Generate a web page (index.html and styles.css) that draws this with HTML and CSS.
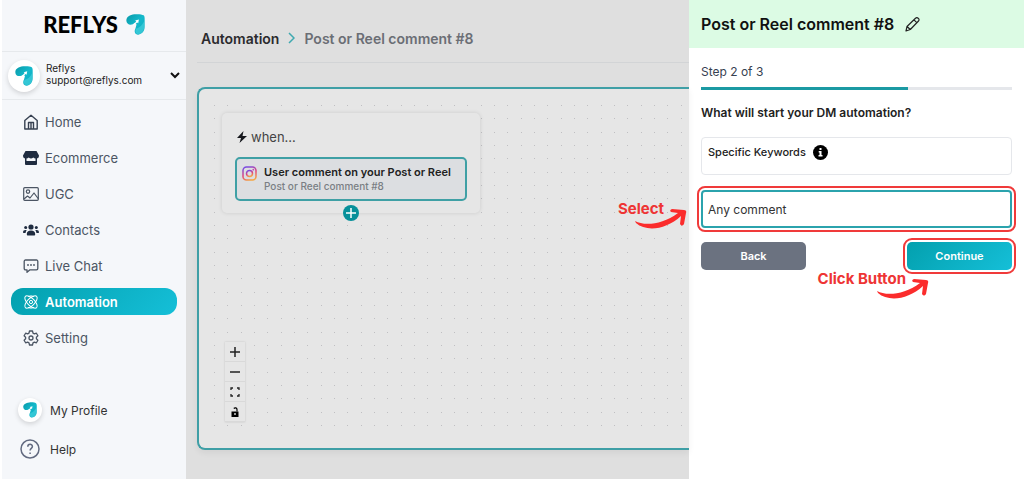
FILE: index.html
```html
<!DOCTYPE html>
<html lang="en">
<head>
  <meta charset="UTF-8">
  <title>Reflys - Automation</title>
  <link rel="stylesheet" href="styles.css">
</head>
<body>
  <!-- shared logo mark -->
  <svg class="defs" width="0" height="0">
    <defs>
      <linearGradient id="markFill" x1="0" y1="0" x2="1" y2="1">
        <stop offset="0" stop-color="#0899a8"/>
        <stop offset="0.5" stop-color="#14b9cb"/>
        <stop offset="1" stop-color="#0cabc0"/>
      </linearGradient>
      <symbol id="mark" viewBox="0 0 56 62">
        <path fill="url(#markFill)" d="M52 4C46 0 34 0 25 1C11 3 1 9 1 19C1 29 11 34 20 30L26 26L31 31L28 42C23 51 26 61 36 61C47 60 55 51 55 38V14C55 9 54 6 52 4Z"/>
        <path fill="#57dbe6" opacity="0.5" d="M30 43C40 41 49 32 54 20V38C53 52 46 60 36 60C27 59 26 49 30 43Z"/>
        <path fill="#fff" d="M38 16L36 27L33 25L22 35L20 33L30 22L27 19Z"/>
      </symbol>
    </defs>
  </svg>

  <div class="app">
    <aside class="sidebar">
      <div class="logo">
        <span>REFLYS</span>
        <svg width="19" height="21"><use href="#mark"/></svg>
      </div>

      <button class="account">
        <span class="avatar"><svg width="18" height="20"><use href="#mark"/></svg></span>
        <span class="account-text">Reflys<br>support@reflys.com</span>
        <svg width="10" height="7" viewBox="0 0 10 7" fill="none" stroke="#111" stroke-width="2"><path d="M1 1l4 4 4-4"/></svg>
      </button>

      <nav class="nav">
        <a href="#">
          <svg viewBox="0 0 16 16" fill="none" stroke="#374151" stroke-width="1.4" stroke-linejoin="round"><path d="M1.800 6.500L8 1.200l6.200 5.300V15H1.800zM5.500 15V8.500h5V15M8 8.500V15"/></svg>
          Home
        </a>
        <a href="#">
          <svg viewBox="0 0 16 16" fill="#1f2c40"><path d="M2.500 1h11L16 5.500c0 2-1 2.800-2 2.800V14a1 1 0 0 1-1 1H3a1 1 0 0 1-1-1V8.300C1 8.300 0 7.500 0 5.500z"/><path fill="#f5f7fa" d="M3.500 8.500q1.200-.2 2.200-1 1.200 1 2.300 1t2.300-1q1 .8 2.200 1V11h-9z"/></svg>
          Ecommerce
        </a>
        <a href="#">
          <svg viewBox="0 0 16 16" fill="none" stroke="#4b5563" stroke-width="1.200" stroke-linejoin="round"><rect x=".7" y="1.700" width="14.600" height="12.600" rx="1"/><circle cx="5" cy="5.600" r="1.700"/><path d="M1 13l3.500-3 2.500 2 4-5 4.500 6"/></svg>
          UGC
        </a>
        <a href="#">
          <svg viewBox="0 0 16 16" fill="#1f2c40"><circle cx="8" cy="5" r="2.600"/><circle cx="2.700" cy="5.500" r="1.500"/><circle cx="13.300" cy="5.500" r="1.500"/><path d="M3.800 12c0-2.400 1.500-3.600 4.200-3.600s4.200 1.200 4.200 3.600c0 1-.4 1.500-1.200 1.500H5c-.8 0-1.200-.5-1.200-1.500zM0 10.500C0 8.800.9 8 2.400 8c.6 0 1 .1 1.400.3-.8.800-1.100 1.600-1.200 2.700H.6c-.4 0-.6-.2-.6-.5zM16 10.500c0-1.700-.9-2.500-2.400-2.500-.6 0-1 .1-1.400.3.800.8 1.100 1.600 1.200 2.700h2c.4 0 .6-.2.6-.5z"/></svg>
          Contacts
        </a>
        <a href="#">
          <svg viewBox="0 0 16 16" fill="none" stroke="#4b5563" stroke-width="1.300" stroke-linejoin="round"><path d="M2.500 2h11a1.300 1.300 0 0 1 1.300 1.300v7.200a1.300 1.300 0 0 1-1.300 1.300H7L4 14.300v-2.500H2.500a1.300 1.300 0 0 1-1.300-1.300V3.300A1.300 1.300 0 0 1 2.500 2z"/><path stroke-width="1.800" stroke-linecap="round" d="M5 7h.01M8 7h.01M11 7h.01"/></svg>
          Live Chat
        </a>
        <a href="#" class="active">
          <svg viewBox="0 0 16 16" fill="none" stroke="#fff" stroke-width="1"><ellipse cx="8" cy="8" rx="8" ry="3.600" transform="rotate(45 8 8)"/><ellipse cx="8" cy="8" rx="8" ry="3.600" transform="rotate(-45 8 8)"/><circle cx="8" cy="8" r="1.600"/><path d="M5 2.500q3-1.200 6 0M5 13.500q3 1.200 6 0"/></svg>
          Automation
        </a>
        <a href="#">
          <svg viewBox="0 0 16 16" fill="none" stroke="#4b5563" stroke-width="1.300" stroke-linejoin="round"><path d="M6.500 1h3l.5 2.100 1.400.8 2-.7 1.500 2.600-1.500 1.400v1.600l1.500 1.400-1.500 2.600-2-.7-1.400.8-.5 2.100h-3L6 12.900l-1.400-.8-2 .7-1.500-2.600 1.500-1.400V7.200L1.100 5.800l1.500-2.600 2 .7L6 3.100z"/><circle cx="8" cy="8" r="2"/></svg>
          Setting
        </a>
      </nav>

      <div class="nav-bottom">
        <a href="#">
          <span class="avatar small"><svg width="14" height="16"><use href="#mark"/></svg></span>
          My Profile
        </a>
        <a href="#">
          <svg width="24" height="20" viewBox="0 0 24 20" fill="none" stroke="#626a80" stroke-width="1.500"><circle cx="12" cy="10" r="9"/><path d="M9.800 7.800c0-3.300 4.600-3.200 4.600-.2 0 1.700-2.300 1.900-2.300 4M12.100 13.500v1.500"/></svg>
          Help
        </a>
      </div>
    </aside>

    <main class="main">
      <header class="breadcrumb">
        <a href="#">Automation</a>
        <svg width="7" height="12" viewBox="0 0 7 12" fill="none" stroke="#3fa9b0" stroke-width="1.500"><path d="M1 1l5 5-5 5"/></svg>
        <span>Post or Reel comment #8</span>
      </header>

      <section class="canvas">
        <svg class="dots" width="100%" height="100%">
          <defs>
            <pattern id="grid" width="40" height="40" patternUnits="userSpaceOnUse">
              <path fill="#bfbfc2" d="M5 6h1v1h-1zM18 6h1v1h-1zM32 6h1v1h-1zM5 19h1v1h-1zM18 19h1v1h-1zM32 19h1v1h-1zM5 33h1v1h-1zM18 33h1v1h-1zM32 33h1v1h-1z"/>
            </pattern>
          </defs>
          <rect width="100%" height="100%" fill="url(#grid)"/>
        </svg>

        <div class="node">
          <div class="node-title">
            <svg width="10" height="12" viewBox="0 0 10 12" fill="#16181d"><path d="M6.500 0L0 7h4L2.500 12 10 5H5.500z"/></svg>
            when...
          </div>
          <div class="trigger">
            <svg width="15" height="15" viewBox="0 0 15 15" fill="none">
              <defs>
                <linearGradient id="insta" x1="0.300" y1="0" x2="0.700" y2="1">
                  <stop offset="0" stop-color="#7a4be0"/>
                  <stop offset="0.500" stop-color="#e0447c"/>
                  <stop offset="1" stop-color="#f5a742"/>
                </linearGradient>
              </defs>
              <g stroke="url(#insta)" stroke-width="1.500"><rect x="1" y="1" width="13" height="13" rx="3.500"/><circle cx="7.500" cy="7.500" r="3"/></g>
              <circle cx="11.300" cy="3.700" r="0.900" fill="#c34bb0"/>
            </svg>
            <div>
              <div class="trigger-name">User comment on your Post or Reel</div>
              <div class="trigger-sub">Post or Reel comment #8</div>
            </div>
          </div>
          <button class="add" aria-label="Add step">
            <svg width="10" height="10" viewBox="0 0 10 10" stroke="#fff" stroke-width="1.500"><path d="M5 0v10M0 5h10"/></svg>
          </button>
        </div>

        <div class="controls">
          <button aria-label="Zoom in"><svg viewBox="0 0 10 10" stroke="#222" stroke-width="1.500"><path d="M5 0v10M0 5h10"/></svg></button>
          <button aria-label="Zoom out"><svg viewBox="0 0 10 10" stroke="#222" stroke-width="1.500"><path d="M0 5h10"/></svg></button>
          <button aria-label="Fit view"><svg viewBox="0 0 10 10" fill="none" stroke="#222" stroke-width="1.300"><path d="M1 3V1h2M7 1h2v2M9 7v2H7M3 9H1V7"/></svg></button>
          <button aria-label="Lock"><svg viewBox="0 0 10 10"><path fill="#000" d="M1.500 4.500h7V10h-7z"/><path fill="none" stroke="#000" stroke-width="1.200" d="M3.800 1.500C5 .2 7 .8 7 2.500v2"/><circle cx="5" cy="7" r="0.900" fill="#e6e6e6"/></svg></button>
        </div>
      </section>
    </main>

    <section class="drawer">
      <header class="drawer-header">
        <h2>Post or Reel comment #8</h2>
        <button class="edit" aria-label="Edit name">
          <svg width="15" height="15" viewBox="0 0 15 15" fill="none" stroke="#222" stroke-width="1.200" stroke-linejoin="round"><path d="M1 14l1-4.500L10.500 1.300a1.700 1.700 0 0 1 2.700 0 1.700 1.700 0 0 1 .3 2.700L5.300 12.500zM9 2.800L12 5.800M2 9.500l3.300 3"/></svg>
        </button>
      </header>

      <div class="drawer-body">
        <p class="step">Step 2 of 3</p>
        <div class="progress"><div class="progress-bar"></div></div>
        <h3>What will start your DM automation?</h3>

        <button class="option option-keywords">
          Specific Keywords
          <svg width="15" height="15" viewBox="0 0 15 15"><circle cx="7.500" cy="7.500" r="7.500" fill="#000"/><path fill="#fff" d="M6.500 3h2v2h-2zM5.700 6h2.800v4h1v1.400H5.500V10h1V7.400h-.8z"/></svg>
        </button>
        <div class="guide">
          <button class="option selected marked">Any comment</button>
          <div class="hint hint-select">
            <span>Select</span>
            <svg width="52" height="22" viewBox="0 0 52 22"><use href="#arrow"/></svg>
          </div>
        </div>

        <div class="actions">
          <button class="btn back">Back</button>
          <div class="guide">
            <button class="btn continue marked">Continue</button>
            <div class="hint hint-click">
              <span>Click Button</span>
              <svg width="52" height="22" viewBox="0 0 52 22">
                <path id="arrow" fill="#fb2c2c" d="M0 13C9 18 27 17 43 5L36 4Q34 2 37 1L49 2Q52 2 51 5L49 16Q47 19 45 16L46 8C31 22 11 24 1 15Z"/>
              </svg>
            </div>
          </div>
        </div>
      </div>
    </section>
  </div>
</body>
</html>
```
FILE: styles.css
```css
* {
  box-sizing: border-box;
}
body {
  margin: 0;
  font-family: Inter, "Open Sans", sans-serif;
  font-size: 13px;
  color: #222;
  background: #fff;
}
button {
  font-family: inherit;
  border: none;
  background: none;
  padding: 0;
  cursor: pointer;
}
a {
  color: inherit;
  text-decoration: none;
}
.defs {
  position: absolute;
}
.app {
  display: flex;
  min-height: 100vh;
  padding-left: 2px;
}

/* sidebar */
.sidebar {
  flex: 0 0 184px;
  display: flex;
  flex-direction: column;
  background: #f5f7fa;
}
.logo {
  height: 51px;
  display: flex;
  align-items: center;
  justify-content: center;
  gap: 8px;
  padding-bottom: 2px;
  font-family: Lato, sans-serif;
  font-size: 22px;
  font-weight: 900;
  color: #000;
}
.account {
  height: 49px;
  display: flex;
  align-items: center;
  gap: 6px;
  padding: 0 6px;
  border-top: 1px solid #e6e9ec;
  border-bottom: 1px solid #e6e9ec;
  text-align: left;
}
.account-text {
  flex: 1;
  font-size: 10px;
  line-height: 12px;
  padding-bottom: 3px;
  color: #222;
}
.avatar {
  width: 32px;
  height: 32px;
  display: flex;
  align-items: center;
  justify-content: center;
  border-radius: 50%;
  background: #fff;
  box-shadow: 0 2px 5px rgba(0,0,0,0.15);
}
.avatar.small {
  width: 24px;
  height: 24px;
}
.nav {
  display: flex;
  flex-direction: column;
  gap: 9px;
  padding: 8px 9px 0;
}
.nav a {
  height: 27px;
  display: flex;
  align-items: center;
  gap: 6px;
  padding: 0 12px;
  border-radius: 12px;
  color: #4b5563;
}
.nav svg {
  width: 16px;
  height: 16px;
}
.nav a.active {
  color: #fff;
  font-weight: 600;
  background: linear-gradient(135deg, #03a0ae, #15bfd8);
}
.nav-bottom {
  margin-top: auto;
  display: flex;
  flex-direction: column;
  gap: 15px;
  padding: 0 16px 18px;
  font-size: 12px;
  color: #333;
}
.nav-bottom a {
  height: 24px;
  display: flex;
  align-items: center;
  gap: 8px;
}

/* main area, dimmed behind the drawer */
.main {
  flex: 1;
  display: flex;
  flex-direction: column;
  padding: 14px 0 29px 11px;
  background: #dfdfdf;
}
.breadcrumb {
  height: 49px;
  display: flex;
  align-items: center;
  gap: 9px;
  padding-left: 4px;
  border-bottom: 1px solid #d2d4d6;
  font-size: 14px;
  font-weight: 600;
  color: #6b6e75;
}
.breadcrumb a {
  color: #2b2b2e;
}
.canvas {
  position: relative;
  flex: 1;
  display: flex;
  flex-direction: column;
  align-items: flex-start;
  justify-content: space-between;
  margin-top: 24px;
  padding: 24px 22px 26px 23px;
  border: 2px solid #3f9fa6;
  border-right: none;
  border-radius: 8px 0 0 8px;
  background: #e6e6e6;
  box-shadow: 0 3px 6px rgba(0,0,0,0.06);
}
.dots {
  position: absolute;
  inset: 10px 0 10px 10px;
  width: calc(100% - 10px);
  height: calc(100% - 20px);
}
.node {
  position: relative;
  width: 258px;
  padding: 16px 13px 12px;
  border-radius: 5px;
  background: #e6e6e6;
  box-shadow: 0 0 4px rgba(0,0,0,0.12);
}
.node-title {
  display: flex;
  align-items: center;
  gap: 4px;
  margin-bottom: 12px;
  padding-left: 2px;
  line-height: 16px;
  color: #444;
}
.trigger {
  display: flex;
  gap: 7px;
  padding: 6px 5px 5px;
  border: 2px solid #3fa0a5;
  border-radius: 5px;
  background: #dcdee1;
}
.trigger-name {
  font-size: 11px;
  font-weight: 600;
  line-height: 14px;
  color: #222;
}
.trigger-sub {
  font-size: 10px;
  font-weight: 500;
  line-height: 15px;
  color: #7a7e84;
}
.trigger svg {
  margin-top: 1px;
}
.add {
  position: absolute;
  left: 50%;
  bottom: -8px;
  width: 16px;
  height: 16px;
  margin-left: -8px;
  display: flex;
  align-items: center;
  justify-content: center;
  border-radius: 50%;
  background: #07909a;
}
.controls {
  position: relative;
  display: flex;
  flex-direction: column;
  margin-left: 3px;
  box-shadow: 0 0 2px rgba(0,0,0,0.15);
}
.controls button {
  width: 20px;
  height: 20px;
  display: flex;
  align-items: center;
  justify-content: center;
  border-bottom: 1px solid #d9d9d9;
  background: #e6e6e6;
}
.controls svg {
  width: 10px;
  height: 10px;
}

/* drawer */
.drawer {
  flex: 0 0 335px;
  background: #fff;
}
.drawer-header {
  height: 48px;
  display: flex;
  align-items: center;
  gap: 11px;
  padding: 0 12px;
  background: #dcfbe4;
}
.drawer-header h2 {
  margin: 0;
  font-size: 16px;
  font-weight: 600;
  color: #111;
}
.edit {
  display: flex;
}
.drawer-body {
  padding: 16px 12px;
}
.step {
  margin: 0 0 7px;
  font-size: 12px;
  line-height: 16px;
  color: #374151;
}
.progress {
  height: 3px;
  background: #e5e7eb;
}
.progress-bar {
  width: 66.6%;
  height: 100%;
  background: #1b9aa3;
}
h3 {
  margin: 15px 0 16px;
  font-size: 12px;
  font-weight: 600;
  line-height: 16px;
}
.option {
  width: 100%;
  height: 38px;
  display: flex;
  align-items: center;
  gap: 7px;
  padding: 0 6px;
  border: 1px solid #e5e7eb;
  border-radius: 4px;
  font-size: 12px;
  color: #333;
}
.option-keywords {
  margin-bottom: 15px;
  padding-bottom: 8px;
  font-size: 11px;
  font-weight: 500;
  color: #222;
}
.option.selected {
  border: 2px solid #2ba3ad;
  padding: 0 5px;
}
.actions {
  display: flex;
  justify-content: space-between;
  margin-top: 14px;
}
.btn {
  width: 105px;
  height: 28px;
  border-radius: 5px;
  font-size: 11px;
  font-weight: 600;
  color: #fff;
}
.back {
  background: #6b7280;
}
.continue {
  background: linear-gradient(135deg, #03a0ae, #15bfd8);
}

/* red guide marks */
.guide {
  position: relative;
}
.marked {
  outline: 2px solid #f03a3a;
  outline-offset: 2px;
}
.hint {
  position: absolute;
  display: flex;
  font-size: 15px;
  font-weight: 700;
  line-height: 18px;
  color: #ee3434;
  white-space: nowrap;
}
.hint svg {
  flex: none;
  margin: 8px 0 0 -29px;
}
.hint-select {
  top: 10px;
  right: calc(100% + 14px);
}
.hint-click {
  top: 28px;
  right: 83px;
}
```
